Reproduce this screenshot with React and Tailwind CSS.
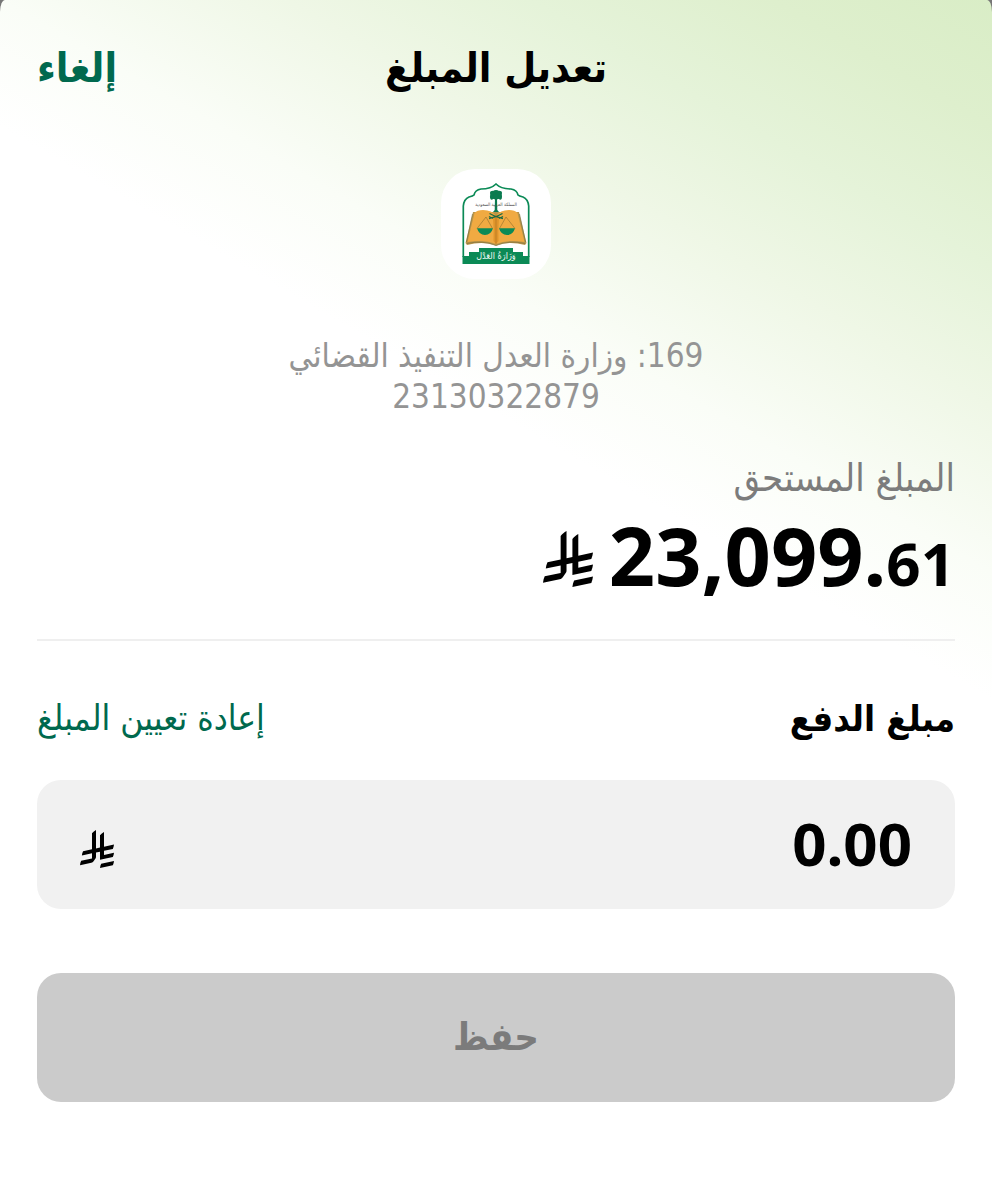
const arabic = "font-['DejaVu_Sans_Condensed','DejaVu_Sans',sans-serif]";
const latin = "font-['Noto_Sans','DejaVu_Sans',sans-serif]";

function Riyal({ className }) {
  return (
    <svg viewBox="0 0 1124.14 1256.39" className={className} fill="currentColor" role="img" aria-label="ريال">
      <path d="M699.62,1113.02h0c-20.06,44.48-33.32,92.75-38.4,143.37l424.51-90.24c20.06-44.47,33.31-92.75,38.4-143.37l-424.51,90.24Z" />
      <path d="M1085.73,895.8c20.06-44.47,33.32-92.75,38.4-143.37l-330.68,70.33v-135.2l292.27-62.11c20.06-44.47,33.32-92.75,38.4-143.37l-330.68,70.27V66.13c-50.67,28.45-95.67,66.32-132.25,110.99v403.35l-132.25,28.11V0c-50.67,28.44-95.67,66.32-132.25,110.99v525.69l-295.91,62.88c-20.06,44.47-33.33,92.75-38.42,143.37l334.33-71.05v170.26l-358.3,76.14c-20.06,44.47-33.32,92.75-38.4,143.37l375.04-79.7c30.53-6.35,56.77-24.4,73.83-49.24l68.78-101.97v-.02c7.14-10.55,11.3-23.27,11.3-36.97v-149.98l132.25-28.11v270.4l424.53-90.28Z" />
    </svg>
  );
}

function MinistryLogo() {
  return (
    <svg viewBox="0 0 120 120" className="size-[120px]" aria-hidden="true">
      <path
        d="M27.300 93V42Q28 35 33 33Q37 32 38 31Q39 26 45 25Q55 25 60 20Q65 25 75 25Q81 26 82 31Q83 32 87 33Q92 35 92.700 42V93"
        fill="none" stroke="#0b8a56" strokeWidth="1.700"
      />
      <path d="M37 48L29.500 79L31 81Q46 77 58 81Q60 82.500 62 81Q74 77 89 81L90.500 79L83 48Z" fill="#b8954a" />
      <path d="M38.500 49Q41 46 47 46Q56 46 60 52Q64 46 73 46Q79 46 81.500 49L88.500 78Q72 75 60 80Q48 75 31.500 78Z" fill="#f0aa42" />
      <path d="M57 54Q58 66 57.500 77L60 80L62.500 77Q62 66 63 54L60 50Z" fill="#e0952b" />
      <path d="M60 51V80" stroke="#a86f22" strokeWidth="0.600" />
      <path d="M36.500 50L30.500 78M83.500 50L89.500 78M31 79.500Q47 76 60 81.500Q73 76 89 79.500" fill="none" stroke="#756c40" strokeWidth="0.600" />
      <path d="M50 53L41 64.500M50 53L56.500 64.500M70 53L63.500 64.500M70 53L79 64.500" fill="none" stroke="#7d6328" strokeWidth="0.500" />
      <path d="M41 64.300H57Q55 71 49 71Q43 71 41 64.300ZM63 64.300H79Q77 71 71 71Q65 71 63 64.300Z" fill="#0b8a56" />
      <path d="M53 54.500Q61 53 66.500 49.500M67 54.500Q59 53 53.500 49.500M53 52.500L57 54.500M67 52.500L63 54.500" fill="none" stroke="#1c6b45" strokeWidth="1.300" />
      <path d="M59 34H61L61.300 46L63 48H57L58.700 46Z" fill="#0b7a50" />
      <g fill="#0a7b4f">
        <circle cx="60" cy="31" r="4.600" />
        <ellipse cx="57" cy="29" rx="3" ry="2.200" />
        <ellipse cx="63" cy="29" rx="3" ry="2.200" />
        <ellipse cx="55.700" cy="32.500" rx="1.700" ry="3.200" />
        <ellipse cx="64.300" cy="32.500" rx="1.700" ry="3.200" />
        <ellipse cx="60" cy="27.500" rx="2.800" ry="1.600" />
      </g>
      <text x="60" y="42" fill="#4b4b4b" fontFamily="'DejaVu Sans Condensed'" fontSize="4.500" textAnchor="middle">
        المملكة العربية السعودية
      </text>
      <path d="M26.500 100V92H33V88H43V84H77V88H87V92H93.500V100Z" fill="#0b8a56" />
      <text x="60" y="95" fill="#f2fbf6" fontFamily="'DejaVu Sans Condensed'" fontSize="9" textAnchor="middle">وَزَارَةُ العَدْل</text>
    </svg>
  );
}

export default function App() {
  return (
    <div dir="rtl" className={`min-h-screen bg-[#777] text-black ${arabic}`}>
      <main className="min-h-screen rounded-t-[5px_12px] bg-white bg-[linear-gradient(30deg,#fff_45%,#fafdf7_55%,#eff7e6_68%,#e5f3d9_79%,#deefcd_90%,#d9edc6_100%)] bg-[length:100%_700px] bg-no-repeat px-[37px]">
        <header className="grid h-[138px] grid-cols-[1fr_auto_1fr] items-center">
          <h1 className="col-start-2 text-[41px] font-bold">تعديل المبلغ</h1>
          <button type="button" className="justify-self-end text-[41px] font-bold text-[#00694e]">إلغاء</button>
        </header>

        <section className="flex flex-col items-center pt-[31px]">
          <div className="flex size-[110px] items-center justify-center overflow-hidden rounded-[34px] bg-white">
            <div className="shrink-0"><MinistryLogo /></div>
          </div>
          <p className="mt-14 text-center text-[33px] leading-[41px] text-[#949494]">
            169: وزارة العدل التنفيذ القضائي
            <br />
            23130322879
          </p>
        </section>

        <section className="mt-9 border-b-2 border-[#efefef] pb-7">
          <h2 className="text-[38px] leading-[50px] text-[#7c7c7c]">المبلغ المستحق</h2>
          <div dir="ltr" className={`mt-1 flex items-center justify-end gap-4 ${latin}`}>
            <Riyal className="h-14 w-[50px]" />
            <p className="text-[81px] leading-[96px] font-bold">
              23,099.<span className="text-[60px]">61</span>
            </p>
          </div>
        </section>

        <form onSubmit={(e) => e.preventDefault()}>
          <div className="flex h-[139px] items-center justify-between pt-4">
            <label htmlFor="amount" className="text-[36px] font-bold">مبلغ الدفع</label>
            <button type="button" className="text-[35px] text-[#00694e]">إعادة تعيين المبلغ</button>
          </div>
          <div className="flex h-[129px] items-center justify-between rounded-3xl bg-[#f1f1f1] px-[43px]">
            <input
              id="amount"
              type="text"
              dir="ltr"
              inputMode="decimal"
              defaultValue="0.00"
              className={`min-w-0 flex-1 bg-transparent pb-1 text-right text-[60px] leading-[80px] font-bold outline-none ${latin}`}
            />
            <Riyal className="mt-2 h-[38px] w-[34px] shrink-0" />
          </div>
          <button type="submit" disabled className="mt-16 h-[129px] w-full rounded-3xl bg-[#cbcbcb] text-[38px] font-bold text-[#7b7b7b]">
            حفظ
          </button>
        </form>
      </main>
    </div>
  );
}
